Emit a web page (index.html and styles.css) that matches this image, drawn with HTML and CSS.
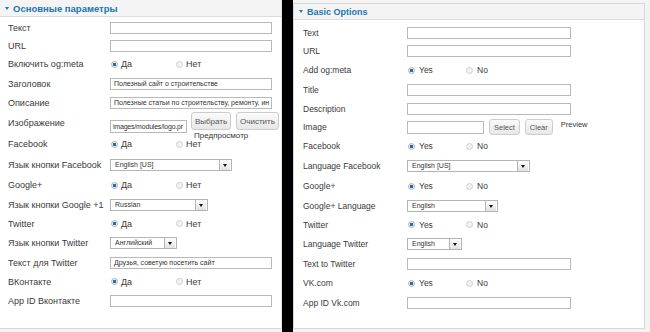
FILE: index.html
```html
<!DOCTYPE html>
<html lang="ru">
<head>
    <meta charset="UTF-8">
    <meta name="viewport" content="width=device-width, initial-scale=1.0">
    <title>Basic Options</title>
    <link rel="stylesheet" href="styles.css">
</head>
<body>
    <div class="page">
        <!-- Russian version -->
        <div class="wrap-ru">
            <section class="panel panel-ru">
                <div class="panel-head"><span class="caret"></span>Основные параметры</div>
                <div class="fields">
                    <label>Текст</label>
                    <div><span class="input"></span></div>

                    <label>URL</label>
                    <div><span class="input"></span></div>

                    <label>Включить og:meta</label>
                    <div class="radios">
                        <span class="radio"><span class="dot on"></span>Да</span>
                        <span class="radio"><span class="dot"></span>Нет</span>
                    </div>

                    <label>Заголовок</label>
                    <div><span class="input">Полезный сайт о строительстве</span></div>

                    <label>Описание</label>
                    <div><span class="input">Полезные статьи по строительству, ремонту, ин</span></div>

                    <label>Изображение</label>
                    <div class="image-ctl">
                        <span class="input input-img">images/modules/logo.pr</span>
                        <div class="img-actions">
                            <div class="btns">
                                <span class="btn">Выбрать</span>
                                <span class="btn">Очистить</span>
                            </div>
                            <span class="preview">Предпросмотр</span>
                        </div>
                    </div>

                    <label>Facebook</label>
                    <div class="radios">
                        <span class="radio"><span class="dot on"></span>Да</span>
                        <span class="radio"><span class="dot"></span>Нет</span>
                    </div>

                    <label>Язык кнопки Facebook</label>
                    <div><span class="select sel-fb">English [US]<span class="drop"></span></span></div>

                    <label>Google+</label>
                    <div class="radios">
                        <span class="radio"><span class="dot on"></span>Да</span>
                        <span class="radio"><span class="dot"></span>Нет</span>
                    </div>

                    <label>Язык кнопки Google +1</label>
                    <div><span class="select sel-g">Russian<span class="drop"></span></span></div>

                    <label>Twitter</label>
                    <div class="radios">
                        <span class="radio"><span class="dot on"></span>Да</span>
                        <span class="radio"><span class="dot"></span>Нет</span>
                    </div>

                    <label>Язык кнопки Twitter</label>
                    <div><span class="select sel-tw">Английский<span class="drop"></span></span></div>

                    <label>Текст для Twitter</label>
                    <div><span class="input">Друзья, советую посетить сайт</span></div>

                    <label>ВКонтакте</label>
                    <div class="radios">
                        <span class="radio"><span class="dot on"></span>Да</span>
                        <span class="radio"><span class="dot"></span>Нет</span>
                    </div>

                    <label>App ID Вконтакте</label>
                    <div><span class="input"></span></div>
                </div>
            </section>
        </div>

        <!-- English version -->
        <div class="wrap-en">
            <section class="panel panel-en">
                <div class="panel-head"><span class="caret"></span>Basic Options</div>
                <div class="fields">
                    <label>Text</label>
                    <div><span class="input"></span></div>

                    <label>URL</label>
                    <div><span class="input"></span></div>

                    <label>Add og:meta</label>
                    <div class="radios">
                        <span class="radio"><span class="dot on"></span>Yes</span>
                        <span class="radio"><span class="dot"></span>No</span>
                    </div>

                    <label>Title</label>
                    <div><span class="input"></span></div>

                    <label>Description</label>
                    <div><span class="input"></span></div>

                    <label>Image</label>
                    <div class="image-ctl">
                        <span class="input input-img"></span>
                        <span class="btn">Select</span>
                        <span class="btn">Clear</span>
                        <span class="preview">Preview</span>
                    </div>

                    <label>Facebook</label>
                    <div class="radios">
                        <span class="radio"><span class="dot on"></span>Yes</span>
                        <span class="radio"><span class="dot"></span>No</span>
                    </div>

                    <label>Language Facebook</label>
                    <div><span class="select sel-fb">English [US]<span class="drop"></span></span></div>

                    <label>Google+</label>
                    <div class="radios">
                        <span class="radio"><span class="dot on"></span>Yes</span>
                        <span class="radio"><span class="dot"></span>No</span>
                    </div>

                    <label>Google+ Language</label>
                    <div><span class="select sel-g">English<span class="drop"></span></span></div>

                    <label>Twitter</label>
                    <div class="radios">
                        <span class="radio"><span class="dot on"></span>Yes</span>
                        <span class="radio"><span class="dot"></span>No</span>
                    </div>

                    <label>Language Twitter</label>
                    <div><span class="select sel-tw">English<span class="drop"></span></span></div>

                    <label>Text to Twitter</label>
                    <div><span class="input"></span></div>

                    <label>VK.com</label>
                    <div class="radios">
                        <span class="radio"><span class="dot on"></span>Yes</span>
                        <span class="radio"><span class="dot"></span>No</span>
                    </div>

                    <label>App ID Vk.com</label>
                    <div><span class="input"></span></div>
                </div>
            </section>
        </div>
    </div>
</body>
</html>
```

FILE: styles.css
```css
body {
    margin: 0;
    padding: 0;
    background-color: #000;
    font-family: "Liberation Sans", Arial, sans-serif;
    color: #3a3a3a;
}

.page {
    display: flex;
    height: 332px;
    gap: 11px;
}

.wrap-ru {
    width: 282px;
    background-color: #f3f3f3;
}

.wrap-en {
    flex: 1;
    background-color: #f3f3f3;
    padding: 3px 5px 0 0;
}

.panel {
    background-color: #fff;
    box-sizing: border-box;
    border-bottom: 1px solid #d8d8d8;
}

.panel-ru {
    height: 329px;
    border-right: 1px solid #e4e4e4;
}

.panel-en {
    height: 326px;
    border: 1px solid #d8d8d8;
}

.panel-head {
    height: 17px;
    box-sizing: border-box;
    display: flex;
    align-items: center;
    gap: 4px;
    padding-left: 5px;
    background-color: #f4f4f4;
    border-bottom: 1px solid #dcdcdc;
    color: #2176b3;
    font-weight: bold;
    font-size: 9.5px;
}

.panel-en .panel-head {
    height: 16px;
    font-size: 9px;
}

.caret {
    width: 0;
    height: 0;
    border-left: 2.5px solid transparent;
    border-right: 2.5px solid transparent;
    border-top: 3px solid #2176b3;
}

.fields {
    display: grid;
    align-items: center;
    padding-top: 2px;
}

.panel-ru .fields {
    grid-template-columns: 102px 1fr;
    grid-template-rows: 18px 17px 20px 19px 19px 21px 22px 20px 20px 19px 19px 20px 19px 19px 20px;
    padding-left: 8px;
    font-size: 9px;
}

.panel-en .fields {
    grid-template-columns: 104px 1fr;
    grid-template-rows: 19px 18px 20px 19px 19px 18px 20px 20px 20px 19px 19px 20px 19px 20px 20px;
    padding-left: 9px;
    padding-top: 3px;
    font-size: 8.5px;
}

.fields > div {
    display: flex;
    align-items: center;
}

.input {
    display: block;
    box-sizing: border-box;
    height: 12px;
    border: 1px solid #b9b9b9;
    background: #fff;
    font-size: 7px;
    line-height: 10px;
    padding-left: 3px;
    white-space: nowrap;
    overflow: hidden;
    color: #333;
}

.panel-ru .input {
    width: 162px;
}

.panel-en .input {
    width: 164px;
}

.panel-ru .input-img {
    width: 77px;
    height: 13px;
    line-height: 11px;
    padding-left: 2px;
    letter-spacing: -0.2px;
}

.panel-en .input-img {
    width: 77px;
    height: 13px;
}

.radio {
    display: flex;
    align-items: center;
    gap: 3px;
    width: 64px;
    padding-left: 1px;
}

.panel-en .radio {
    width: 57px;
    gap: 4px;
}

.dot {
    width: 7px;
    height: 7px;
    box-sizing: border-box;
    border-radius: 50%;
    border: 1px solid #cfcfcf;
    background: #f2f2f2;
}

.dot.on {
    border-color: #b4b4b4;
    background: radial-gradient(circle, #1d6fb8 0 1.6px, #eaeaea 2px);
}

.image-ctl {
    align-self: start;
    gap: 4px;
}

.panel-en .image-ctl {
    align-self: center;
    gap: 5px;
}

.img-actions {
    display: flex;
    flex-direction: column;
    align-items: flex-start;
}

.btns {
    display: flex;
    gap: 5px;
}

.btn {
    display: flex;
    align-items: center;
    justify-content: center;
    box-sizing: border-box;
    height: 18px;
    padding: 0 5px;
    border: 1px solid #cdcdcd;
    border-radius: 3px;
    background: linear-gradient(#fbfbfb, #e7e7e7);
    font-size: 8px;
    color: #555;
}

.panel-ru .btn:first-child {
    width: 40px;
}

.panel-ru .btn:last-child {
    width: 43px;
}

.panel-en .btn {
    height: 16px;
    padding: 0 4px;
    font-size: 7.5px;
}

.preview {
    font-size: 8px;
    color: #333;
    margin-top: 1px;
    padding-left: 3px;
}

.panel-en .preview {
    align-self: flex-start;
    margin-top: 1px;
    padding-left: 3px;
    font-size: 7.5px;
}

.select {
    position: relative;
    display: block;
    box-sizing: border-box;
    height: 12px;
    border: 1px solid #b4b4b4;
    background: #fff;
    font-size: 7px;
    line-height: 10px;
    padding-left: 4px;
    color: #333;
}

.drop {
    position: absolute;
    right: 1px;
    top: 0;
    width: 11px;
    height: 10px;
    box-sizing: border-box;
    border-left: 1px solid #b4b4b4;
    background: linear-gradient(#fdfdfd, #e2e2e2);
}

.drop::after {
    content: "";
    position: absolute;
    left: 3px;
    top: 4px;
    border-left: 2.5px solid transparent;
    border-right: 2.5px solid transparent;
    border-top: 3px solid #111;
}

.panel-ru .sel-fb {
    width: 122px;
}

.panel-ru .sel-g {
    width: 98px;
}

.panel-ru .sel-tw {
    width: 67px;
}

.panel-en .sel-fb {
    width: 123px;
}

.panel-en .sel-g {
    width: 91px;
}

.panel-en .sel-tw {
    width: 55px;
}
```
